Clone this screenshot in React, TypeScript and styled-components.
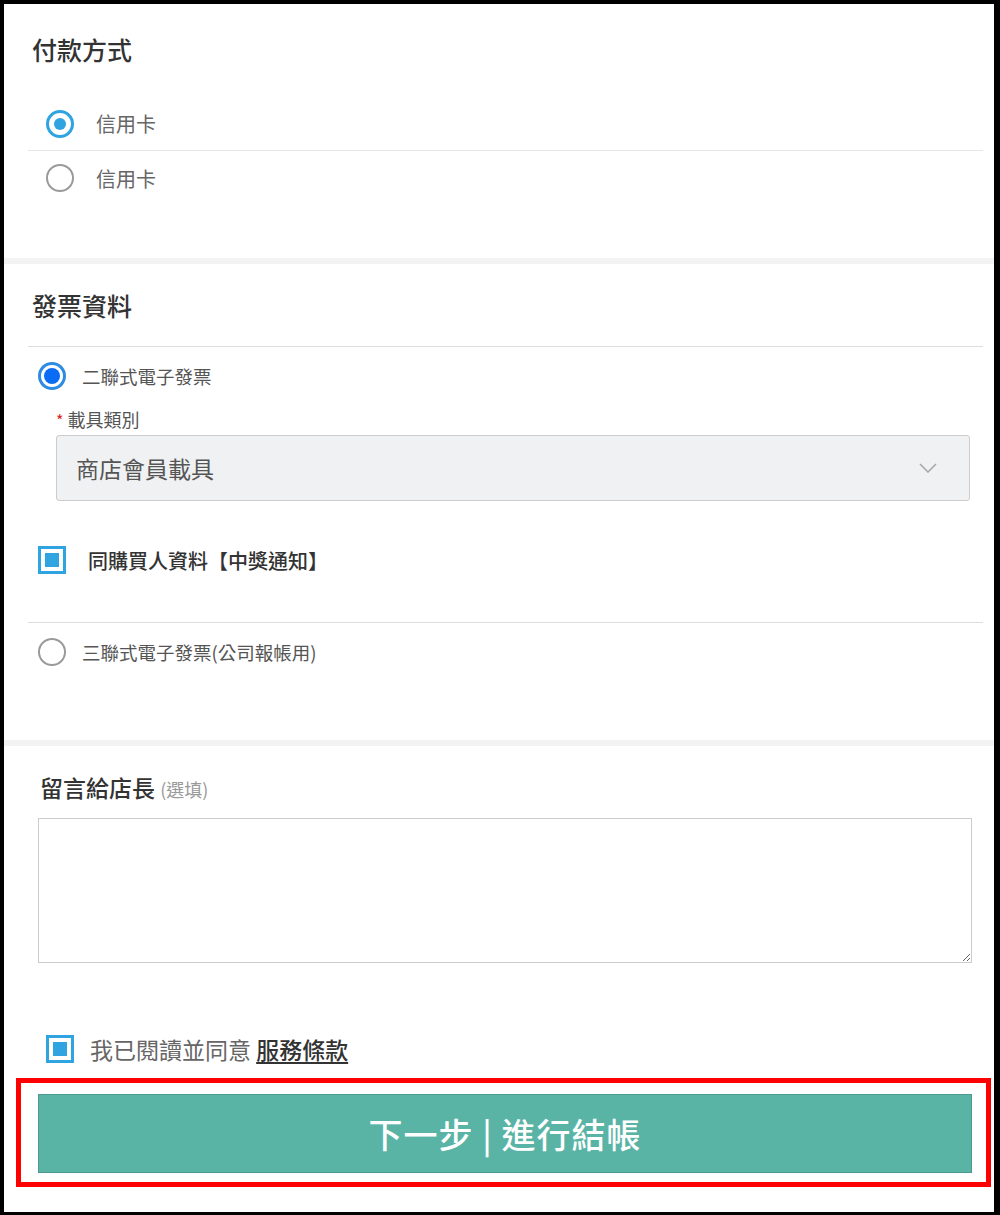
import { createGlobalStyle, styled } from "styled-components";

const GlobalStyle = createGlobalStyle`
  html, body {
    margin: 0;
    padding: 0;
    background: #ffffff;
  }
  * {
    box-sizing: border-box;
  }
  body {
    font-family: "Noto Sans CJK TC", "Noto Sans", "Liberation Sans", sans-serif;
  }
`;

const App = () => {
  return (
    <>
      <GlobalStyle />
      <Frame>
        <Section>
          <SectionTitle>付款方式</SectionTitle>
          <PaymentList>
            <PaymentRow $divider>
              <Radio $checked $tone="light" />
              <PaymentText>信用卡</PaymentText>
            </PaymentRow>
            <PaymentRow>
              <Radio />
              <PaymentText>信用卡</PaymentText>
            </PaymentRow>
          </PaymentList>
        </Section>

        <Band />

        <Section>
          <SectionTitle $divider>發票資料</SectionTitle>
          <InvoiceOption>
            <Radio $checked $tone="strong" />
            <InvoiceText>二聯式電子發票</InvoiceText>
          </InvoiceOption>
          <CarrierBlock>
            <FieldLabel>
              <Required>*</Required>載具類別
            </FieldLabel>
            <SelectBox>
              <SelectValue>商店會員載具</SelectValue>
              <svg width="18" height="10" viewBox="0 0 18 10" fill="none">
                <path d="M1 1l8 8 8-8" stroke="#a8a8a8" strokeWidth="1.6" />
              </svg>
            </SelectBox>
          </CarrierBlock>
          <CheckRow>
            <CheckBox />
            <CheckText>同購買人資料【中獎通知】</CheckText>
          </CheckRow>
          <InvoiceOption $top>
            <Radio />
            <InvoiceText>三聯式電子發票(公司報帳用)</InvoiceText>
          </InvoiceOption>
        </Section>

        <Band />

        <NoteSection>
          <NoteTitle>
            留言給店長 <Optional>(選填)</Optional>
          </NoteTitle>
          <NoteArea />
          <AgreeRow>
            <CheckBox />
            <AgreeText>
              我已閱讀並同意 <TermsLink>服務條款</TermsLink>
            </AgreeText>
          </AgreeRow>
          <Highlight>
            <NextButton>下一步 | 進行結帳</NextButton>
          </Highlight>
        </NoteSection>
      </Frame>
    </>
  );
};

export default App;

const Frame = styled.div`
  width: 1000px;
  height: 1215px;
  border-style: solid;
  border-color: #000000;
  border-width: 4px 6px 3px 4px;
  background: #ffffff;
  display: flex;
  flex-direction: column;
  overflow: hidden;
`;

const Section = styled.div`
  padding: 0 11px 0 24px;
  display: flex;
  flex-direction: column;
`;

const Band = styled.div`
  height: 6px;
  background: #f3f3f3;
  flex-shrink: 0;
`;

const SectionTitle = styled.div<{ $divider?: boolean }>`
  margin-top: ${(p) => (p.$divider ? "26px" : "30px")};
  padding-left: 4px;
  height: ${(p) => (p.$divider ? "57px" : "32px")};
  line-height: 30px;
  font-size: 25px;
  font-weight: 500;
  color: #333333;
  border-bottom: ${(p) => (p.$divider ? "1px solid #dddddd" : "none")};
`;

const PaymentList = styled.div`
  margin-top: 31px;
  padding-bottom: 53px;
  display: flex;
  flex-direction: column;
`;

const PaymentRow = styled.div<{ $divider?: boolean }>`
  height: 54px;
  padding-left: 18px;
  display: flex;
  align-items: center;
  gap: 22px;
  border-bottom: ${(p) => (p.$divider ? "1px solid #e6e6e6" : "none")};
`;

const Radio = styled.span<{ $checked?: boolean; $tone?: "light" | "strong" }>`
  width: 28px;
  height: 28px;
  border-radius: 50%;
  flex-shrink: 0;
  position: relative;
  border: ${(p) =>
    p.$checked
      ? p.$tone === "strong"
        ? "3px solid #2d8be3"
        : "3px solid #2fa4e0"
      : "2px solid #9a9a9a"};

  &::after {
    content: "";
    display: ${(p) => (p.$checked ? "block" : "none")};
    position: absolute;
    left: 50%;
    top: 50%;
    width: ${(p) => (p.$tone === "strong" ? "16px" : "12px")};
    height: ${(p) => (p.$tone === "strong" ? "16px" : "12px")};
    border-radius: 50%;
    transform: translate(-50%, -50%);
    background: ${(p) => (p.$tone === "strong" ? "#0a6cf5" : "#2fa4e0")};
  }
`;

const PaymentText = styled.span`
  font-size: 20px;
  color: #666666;
`;

const InvoiceOption = styled.div<{ $top?: boolean }>`
  height: 58px;
  padding-left: 10px;
  display: flex;
  align-items: center;
  gap: 16px;
  border-top: ${(p) => (p.$top ? "1px solid #dddddd" : "none")};
  margin-top: ${(p) => (p.$top ? "32px" : "0")};
  margin-bottom: ${(p) => (p.$top ? "60px" : "0")};
`;

const InvoiceText = styled.span`
  font-size: 18.5px;
  color: #555555;
`;

const CarrierBlock = styled.div`
  margin-top: 2px;
  padding-left: 28px;
  padding-right: 13px;
  display: flex;
  flex-direction: column;
  gap: 3px;
`;

const FieldLabel = styled.div`
  font-size: 18px;
  line-height: 24px;
  color: #555555;
`;

const Required = styled.span`
  color: #e02020;
  font-size: 16px;
  margin-right: 4px;
`;

const SelectBox = styled.div`
  height: 66px;
  padding: 0 32px 0 19px;
  display: flex;
  align-items: center;
  justify-content: space-between;
  background: #f0f1f3;
  border: 1px solid #cccccc;
  border-radius: 3px;
`;

const SelectValue = styled.span`
  font-size: 23px;
  color: #555555;
`;

const CheckRow = styled.div`
  margin-top: 29px;
  height: 60px;
  padding-left: 10px;
  display: flex;
  align-items: center;
  gap: 22px;
`;

const CheckBox = styled.span`
  width: 28px;
  height: 28px;
  flex-shrink: 0;
  border: 3px solid #2fa4e0;
  background: #ffffff;
  display: flex;
  align-items: center;
  justify-content: center;

  &::after {
    content: "";
    width: 14px;
    height: 14px;
    background: #2fa4e0;
  }
`;

const CheckText = styled.span`
  font-size: 20px;
  font-weight: 500;
  color: #333333;
`;

const NoteSection = styled.div`
  padding: 0 22px 0 12px;
  display: flex;
  flex-direction: column;
`;

const NoteTitle = styled.div`
  margin-top: 26px;
  padding-left: 24px;
  height: 30px;
  line-height: 30px;
  font-size: 23px;
  font-weight: 500;
  color: #333333;
`;

const Optional = styled.span`
  font-size: 18px;
  font-weight: 400;
  color: #999999;
`;

const NoteArea = styled.textarea`
  margin: 16px 0 0 22px;
  width: 934px;
  height: 145px;
  border: 1px solid #cccccc;
  border-radius: 0;
  outline: none;
  font-family: inherit;
  font-size: 16px;
`;

const AgreeRow = styled.div`
  margin-top: 71px;
  padding-left: 30px;
  display: flex;
  align-items: center;
  gap: 16px;
  height: 30px;
`;

const AgreeText = styled.span`
  font-size: 23px;
  color: #666666;
`;

const TermsLink = styled.a`
  color: #333333;
  font-weight: 500;
  text-decoration: underline;
  text-underline-offset: 3px;
  cursor: pointer;
`;

const Highlight = styled.div`
  margin-top: 14px;
  width: 975px;
  border: 5px solid #ff0000;
  padding: 11px 14px 9px 17px;
`;

const NextButton = styled.button`
  width: 100%;
  height: 79px;
  background: #5ab4a6;
  border: 1px solid #4c9a8f;
  color: #ffffff;
  font-family: inherit;
  font-size: 34px;
  font-weight: 500;
  letter-spacing: 1px;
  cursor: pointer;
`;
